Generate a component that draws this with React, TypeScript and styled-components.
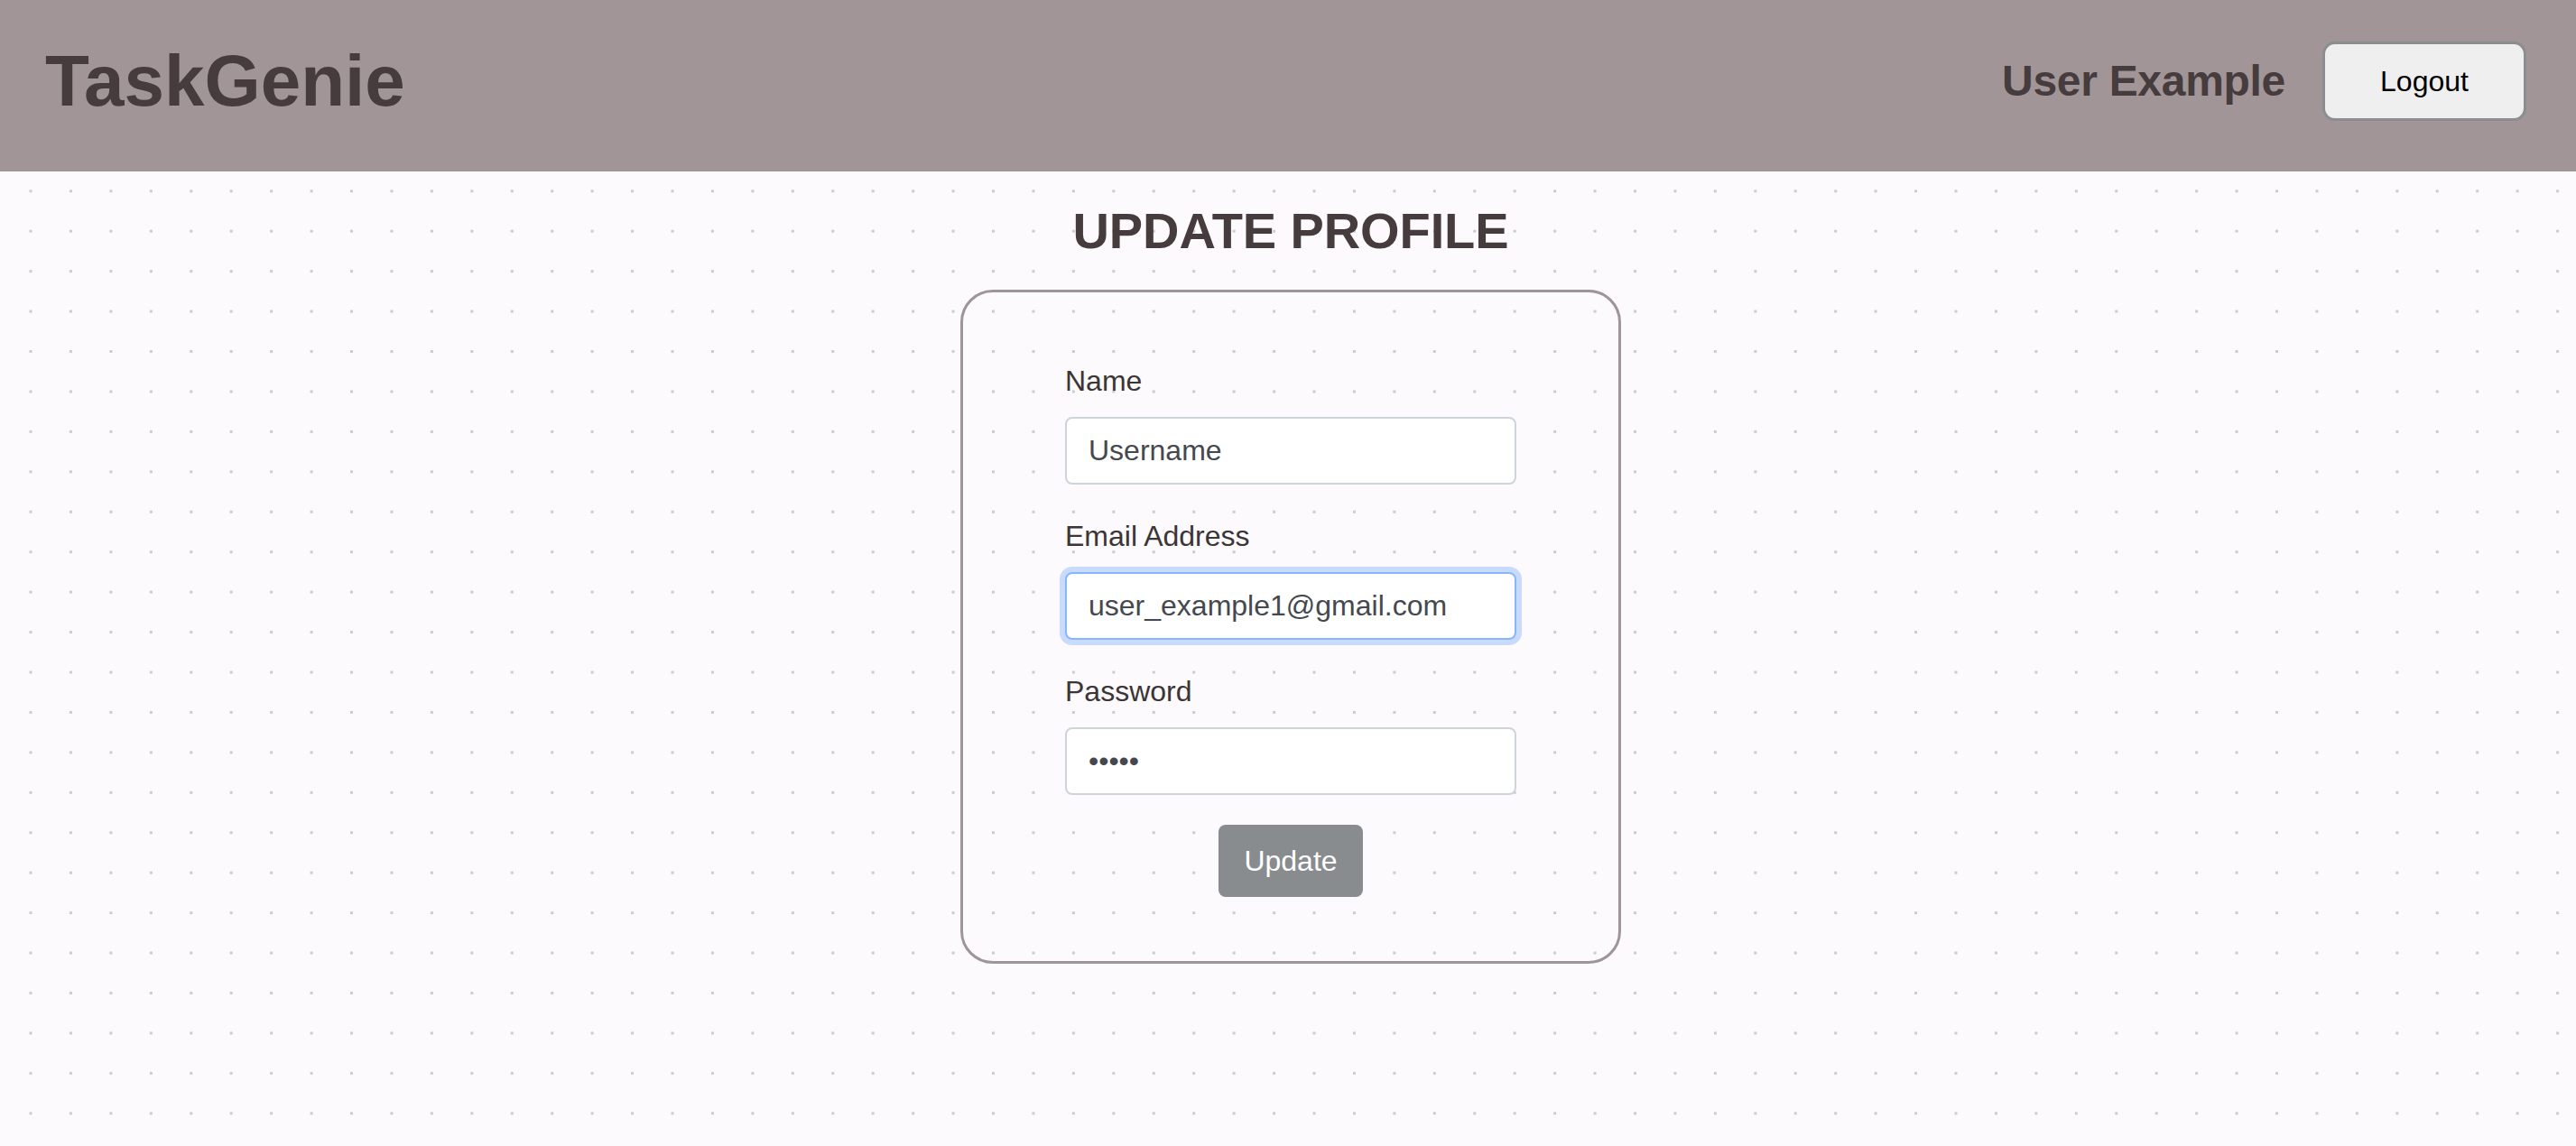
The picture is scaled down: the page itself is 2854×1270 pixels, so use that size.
import React from "react";
import styled, { createGlobalStyle, css } from "styled-components";

const GlobalStyle = createGlobalStyle`
  html, body {
    margin: 0;
    padding: 0;
  }
  body {
    font-family: "Liberation Sans", Arial, sans-serif;
    background-color: #fcfafc;
    background-image: radial-gradient(circle, #cfcacf 1.4px, rgba(252, 250, 252, 0) 2px);
    background-size: 44.45px 44.45px;
    background-position: 11.8px 11.8px;
    min-height: 100vh;
  }
  * {
    box-sizing: border-box;
  }
`;

const Page = styled.div`
  min-height: 100vh;
  display: flex;
  flex-direction: column;
`;

const Header = styled.header`
  height: 190px;
  background: #a19597;
  display: flex;
  align-items: center;
  justify-content: space-between;
  padding: 0 55px 10px 50px;
`;

const Logo = styled.h1`
  margin: 0;
  font-size: 80px;
  line-height: 1;
  font-weight: 700;
  color: #463c3d;
`;

const UserArea = styled.div`
  display: flex;
  align-items: center;
  gap: 41px;
`;

const UserName = styled.span`
  font-size: 48px;
  line-height: 1;
  font-weight: 700;
  color: #463c3d;
  letter-spacing: -0.3px;
`;

const LogoutButton = styled.button`
  height: 88px;
  width: 226px;
  border: 3px solid #8b8e90;
  border-radius: 14px;
  background: #efefef;
  color: #000;
  font-family: "Liberation Sans", Arial, sans-serif;
  font-size: 32px;
  padding: 0;
  cursor: pointer;
`;

const Main = styled.main`
  display: flex;
  flex-direction: column;
  align-items: center;
  padding: 32px 0 0 6px;
`;

const Title = styled.h2`
  margin: 0 0 32px;
  font-size: 56px;
  line-height: 1.2;
  font-weight: 700;
  color: #463c3d;
  letter-spacing: -0.1px;
`;

const Card = styled.form`
  width: 732px;
  border: 3px solid #9f9598;
  border-radius: 36px;
  padding: 74px 113px 71px;
  display: flex;
  flex-direction: column;
`;

const Field = styled.div`
  display: flex;
  flex-direction: column;
  margin-bottom: 33px;
`;

const Label = styled.label`
  font-size: 32px;
  line-height: 48px;
  color: #3b3536;
  margin-bottom: 16px;
`;

const Input = styled.input<{ $focused?: boolean }>`
  width: 100%;
  height: 75px;
  border: 2px solid #ced4da;
  border-radius: 8px;
  background: #fff;
  padding: 0 24px;
  font-family: "Liberation Sans", Arial, sans-serif;
  font-size: 32px;
  color: #45494f;
  outline: none;
  ${(p) =>
    p.$focused &&
    css`
      border-color: #86b7fe;
      box-shadow: 0 0 0 6px #c9dbfc;
    `}
`;

const Actions = styled.div`
  display: flex;
  justify-content: center;
`;

const UpdateButton = styled.button`
  height: 80px;
  width: 160px;
  border: none;
  border-radius: 8px;
  background: #898c8e;
  color: #fff;
  font-family: "Liberation Sans", Arial, sans-serif;
  font-size: 32px;
  padding: 0;
`;

export default function App() {
  return (
    <Page>
      <GlobalStyle />
      <Header>
        <Logo>TaskGenie</Logo>
        <UserArea>
          <UserName>User Example</UserName>
          <LogoutButton type="button">Logout</LogoutButton>
        </UserArea>
      </Header>
      <Main>
        <Title>UPDATE PROFILE</Title>
        <Card onSubmit={(e) => e.preventDefault()}>
          <Field>
            <Label htmlFor="name">Name</Label>
            <Input id="name" type="text" defaultValue="Username" />
          </Field>
          <Field>
            <Label htmlFor="email">Email Address</Label>
            <Input id="email" type="email" defaultValue="user_example1@gmail.com" $focused />
          </Field>
          <Field>
            <Label htmlFor="password">Password</Label>
            <Input id="password" type="password" defaultValue="12345" />
          </Field>
          <Actions>
            <UpdateButton type="submit">Update</UpdateButton>
          </Actions>
        </Card>
      </Main>
    </Page>
  );
}
